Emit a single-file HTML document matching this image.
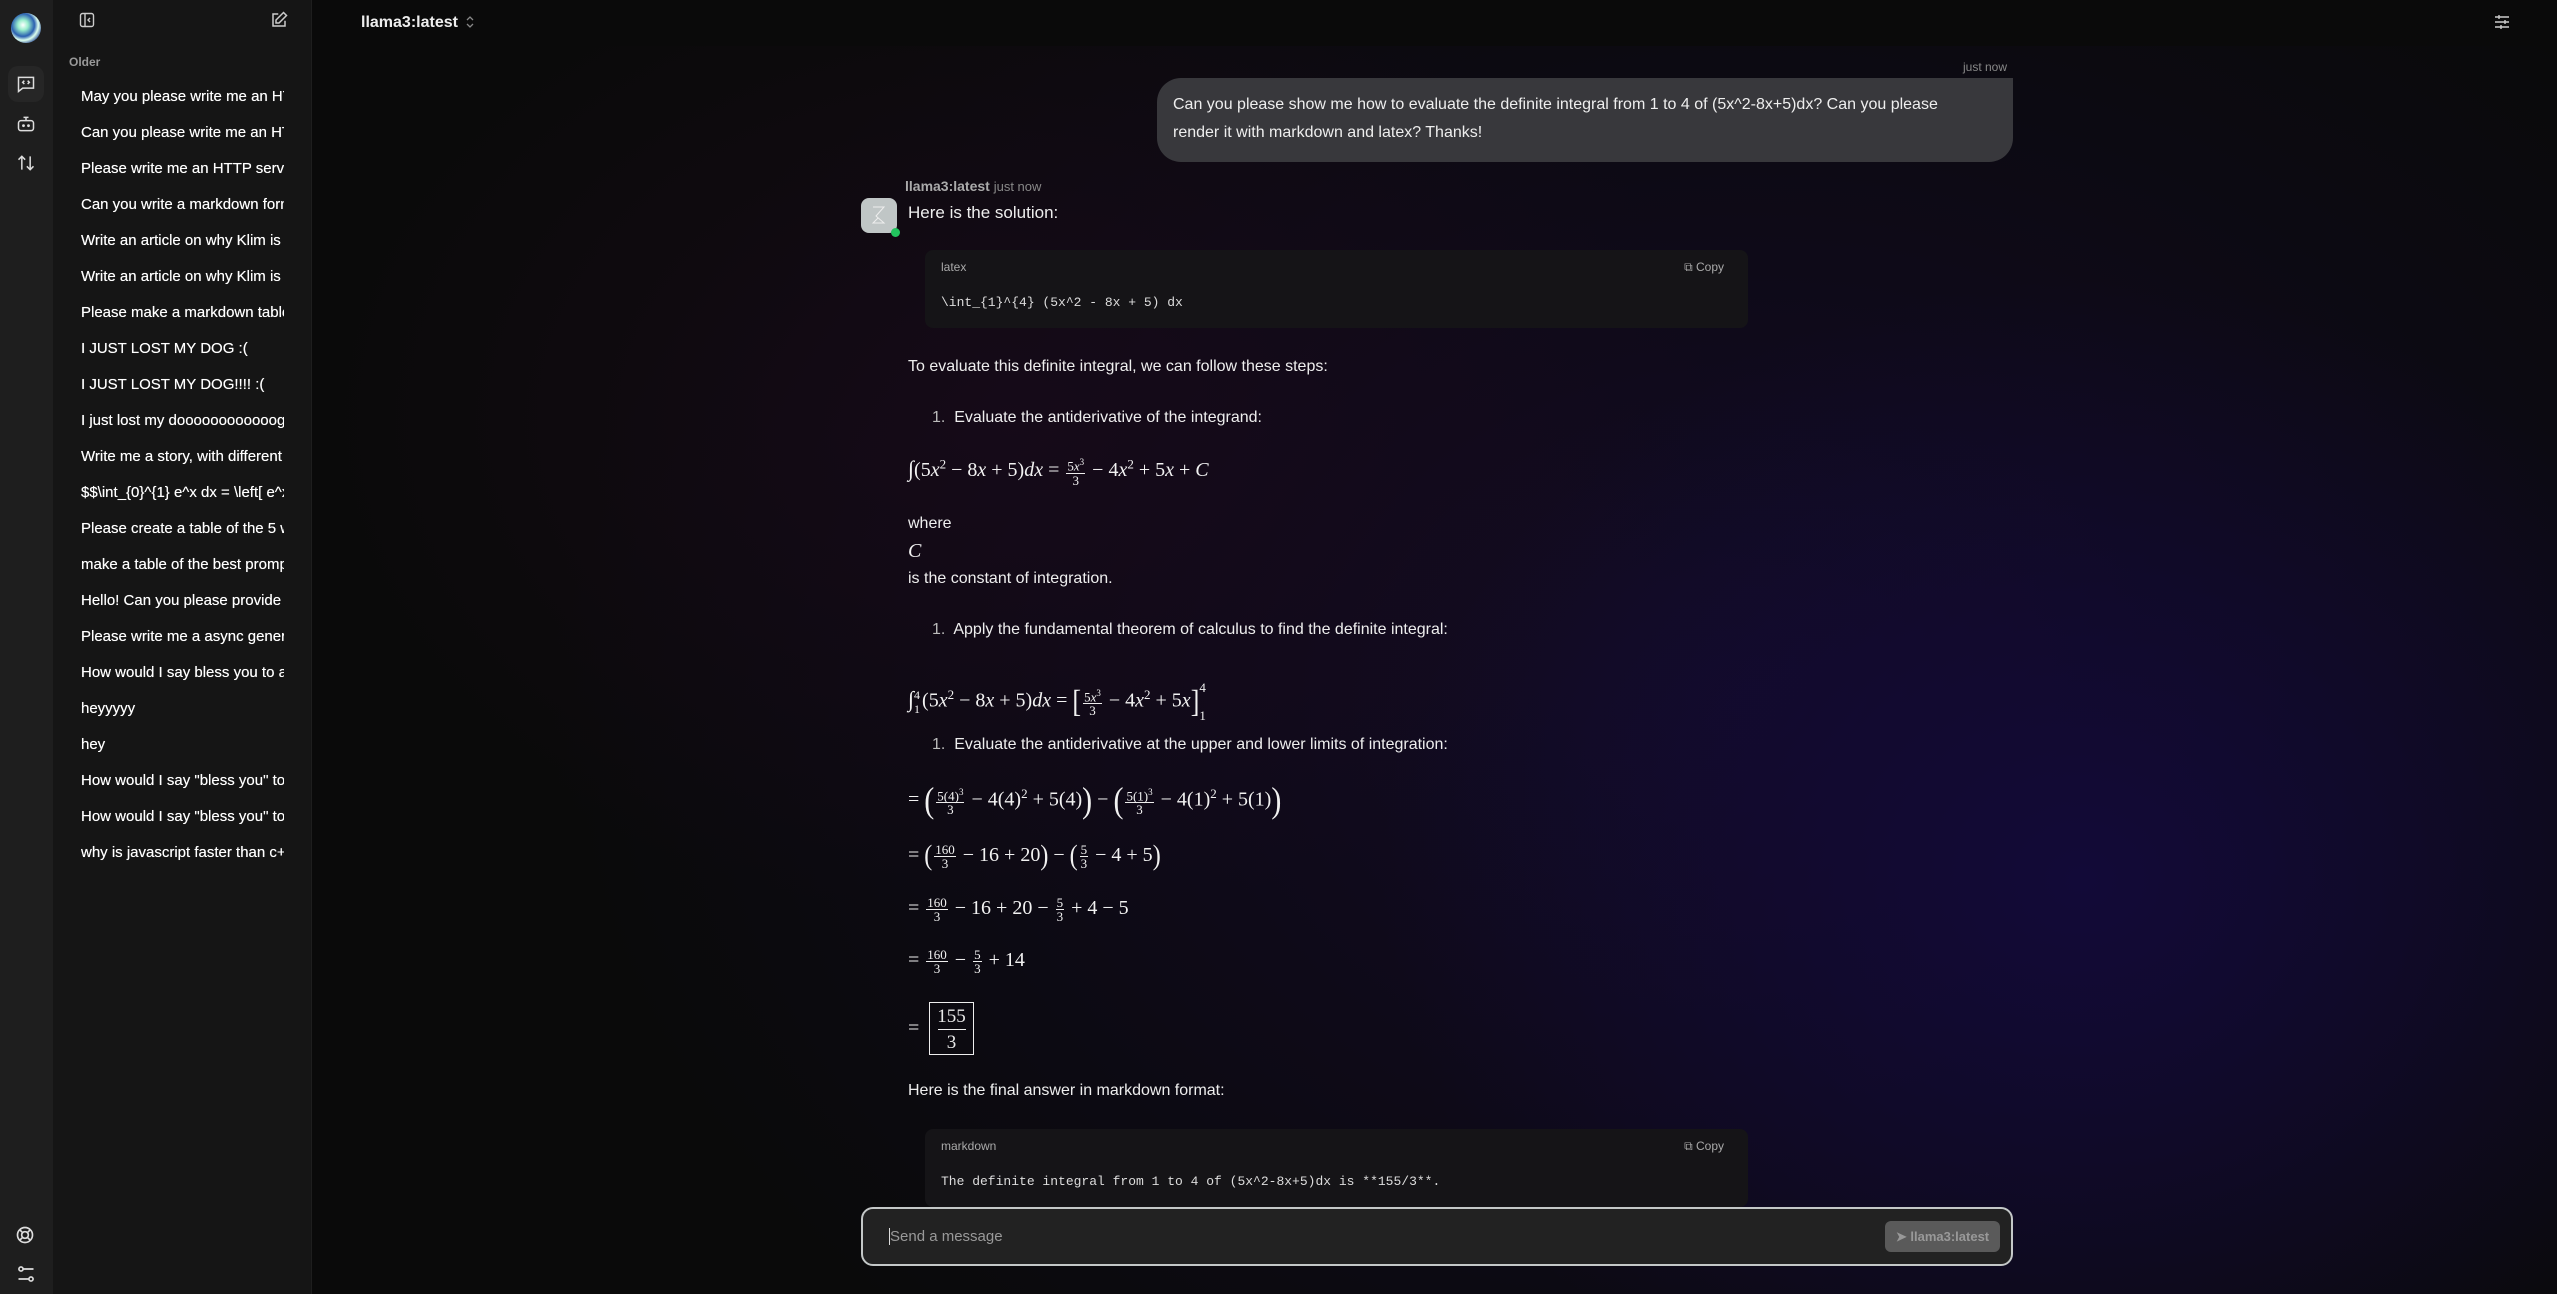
<!DOCTYPE html>
<html><head><meta charset="utf-8"><style>
*{margin:0;padding:0;box-sizing:border-box}
body{width:2557px;height:1294px;overflow:hidden;background:#0a0a0a;font-family:"Liberation Sans",sans-serif;color:#e8e8e8;position:relative}
.rail{position:absolute;left:0;top:0;width:53px;height:1294px;background:#1e1e1e}
.side{position:absolute;left:53px;top:0;width:259px;height:1294px;background:#151515;border-right:1px solid #1e1e1e}
.main{position:absolute;left:312px;top:0;right:0;height:1294px;background:
radial-gradient(ellipse 700px 600px at 1770px 880px,#120a38 0%,rgba(18,10,56,0.6) 40%,rgba(18,10,56,0) 100%),
radial-gradient(ellipse 700px 500px at 700px 420px,rgba(28,10,28,0.6) 0%,rgba(28,10,28,0) 100%),
radial-gradient(ellipse 1200px 900px at 1440px 700px,#130b26 0%,#0c0a12 70%,#0a0a0a 100%)}
.hdr{position:absolute;left:312px;top:0;right:0;height:46px;background:#0a0a0a}
.abs{position:absolute;white-space:nowrap}
.si{position:absolute;left:81px;width:203px;overflow:hidden;white-space:nowrap;font-size:15px;color:#fff;font-weight:400;text-shadow:0 0 0.4px #fff}
.ic{position:absolute}
.t{position:absolute;font-size:16px;color:#eee;white-space:nowrap}
.code{position:absolute;left:925px;width:823px;background:#151417;border-radius:8px}
.code .lab{position:absolute;left:16px;top:10px;font-size:12px;color:#aaa}
.code .cp{position:absolute;right:24px;top:10px;font-size:12px;color:#aaa}
.code .src{position:absolute;left:16px;font-family:"Liberation Mono",monospace;font-size:13px;color:#ddd}
.m{position:absolute;font-family:"Liberation Serif",serif;font-size:20px;color:#f2f2f2;white-space:nowrap}
.m i{font-style:italic}
.fr{display:inline-block;vertical-align:middle;text-align:center;font-size:13px;line-height:13px;margin:0 2px}
.fr span{display:block;padding:0 1px}
.fr span:first-child{border-bottom:1px solid #eee}
sup{font-size:13px}
.big{font-size:30px;vertical-align:middle;display:inline-block;transform:scaleY(1.2)}
</style></head><body>
<div class="rail"></div>
<div class="side"></div>
<div class="main"></div>
<div class="hdr"></div>

<div class="ic" style="left:11px;top:13px;width:30px;height:30px;border-radius:50%;background:radial-gradient(circle at 40% 40%,#fff 0,#9ec 20%,#2a5fb0 45%,#dfe 60%,#1b3d8a 80%)"></div>
<div class="ic" style="left:8px;top:66px;width:36px;height:36px;border-radius:10px;background:#262626"></div>
<svg class="ic" style="left:16px;top:74px" width="20" height="20" viewBox="0 0 24 24" fill="none" stroke="#ddd" stroke-width="1.8"><path d="M3 4h18v13H8l-5 4z"/><path d="M10 8l-2 2 2 2M14 8l2 2-2 2"/></svg>
<svg class="ic" style="left:16px;top:114px" width="20" height="20" viewBox="0 0 24 24" fill="none" stroke="#ddd" stroke-width="1.8"><rect x="3" y="8" width="18" height="12" rx="3"/><path d="M12 8V4M9 4h6"/><circle cx="9" cy="14" r="0.8" fill="#ddd"/><circle cx="15" cy="14" r="0.8" fill="#ddd"/></svg>
<svg class="ic" style="left:16px;top:153px" width="20" height="20" viewBox="0 0 24 24" fill="none" stroke="#ddd" stroke-width="1.8"><path d="M7 20V4M3 8l4-4 4 4M17 4v16M13 16l4 4 4-4"/></svg>
<svg class="ic" style="left:15px;top:1225px" width="20" height="20" viewBox="0 0 24 24" fill="none" stroke="#ddd" stroke-width="2"><circle cx="12" cy="12" r="9"/><circle cx="12" cy="12" r="4"/><path d="M5.6 5.6l3.6 3.6M14.8 14.8l3.6 3.6M18.4 5.6l-3.6 3.6M9.2 14.8l-3.6 3.6"/></svg>
<svg class="ic" style="left:16px;top:1264px" width="20" height="20" viewBox="0 0 24 24" fill="none" stroke="#ddd" stroke-width="2"><circle cx="6" cy="6" r="2.5"/><path d="M9 6h12M3 18h12"/><circle cx="18" cy="18" r="2.5"/></svg>

<svg class="ic" style="left:79px;top:12px" width="16" height="16" viewBox="0 0 16 16" fill="none" stroke="#ccc" stroke-width="1.4"><rect x="1.5" y="1.5" width="13" height="13" rx="2"/><path d="M6 2v12M11 6l-2 2 2 2"/></svg>
<svg class="ic" style="left:270px;top:11px" width="18" height="18" viewBox="0 0 24 24" fill="none" stroke="#ccc" stroke-width="2"><path d="M20 13v7H4V4h7"/><path d="M18 2l4 4-10 10H8v-4z"/></svg>
<div class="abs" style="left:69px;top:55px;font-size:12px;color:#999;font-weight:600">Older</div>
<div class="si" style="top:88px">May you please write me an HTTP server</div>
<div class="si" style="top:124px">Can you please write me an HTTP server</div>
<div class="si" style="top:160px">Please write me an HTTP server</div>
<div class="si" style="top:196px">Can you write a markdown formatted</div>
<div class="si" style="top:232px">Write an article on why Klim is</div>
<div class="si" style="top:268px">Write an article on why Klim is</div>
<div class="si" style="top:304px">Please make a markdown table</div>
<div class="si" style="top:340px">I JUST LOST MY DOG :(</div>
<div class="si" style="top:376px">I JUST LOST MY DOG!!!! :(</div>
<div class="si" style="top:412px">I just lost my doooooooooooog</div>
<div class="si" style="top:448px">Write me a story, with different</div>
<div class="si" style="top:484px">$$\int_{0}^{1} e^x dx = \left[ e^x</div>
<div class="si" style="top:520px">Please create a table of the 5 ways</div>
<div class="si" style="top:556px">make a table of the best prompts</div>
<div class="si" style="top:592px">Hello! Can you please provide me</div>
<div class="si" style="top:628px">Please write me a async generator</div>
<div class="si" style="top:664px">How would I say bless you to a</div>
<div class="si" style="top:700px">heyyyyy</div>
<div class="si" style="top:736px">hey</div>
<div class="si" style="top:772px">How would I say "bless you" to</div>
<div class="si" style="top:808px">How would I say "bless you" to</div>
<div class="si" style="top:844px">why is javascript faster than c++</div>

<div class="abs" style="left:361px;top:14px;font-size:16px;font-weight:700;color:#eee">llama3:latest</div>
<svg class="ic" style="left:465px;top:15px" width="10" height="14" viewBox="0 0 10 14" fill="none" stroke="#888" stroke-width="1.3"><path d="M2 5l3-3 3 3M2 9l3 3 3-3"/></svg>
<svg class="ic" style="left:2493px;top:14px" width="18" height="16" viewBox="0 0 18 16" fill="none" stroke="#ccc" stroke-width="1.4"><path d="M2 3h14M2 8h14M2 13h14M6 1v4M12 6v4M8 11v4"/></svg>

<div class="abs" style="left:1963px;top:60px;font-size:12px;color:#888">just now</div>
<div class="abs" style="left:1157px;top:78px;width:856px;height:84px;background:#38383c;border-radius:24px 0 24px 24px"></div>
<div class="t" style="left:1173px;top:91px;line-height:28px">Can you please show me how to evaluate the definite integral from 1 to 4 of (5x^2-8x+5)dx? Can you please<br>render it with markdown and latex? Thanks!</div>

<div class="abs" style="left:861px;top:198px;width:36px;height:35px;background:#c0c6c6;border-radius:8px"></div>
<svg class="ic" style="left:870px;top:205px" width="18" height="20" viewBox="0 0 18 20" fill="none" stroke="#eee" stroke-width="1"><path d="M3 2h11L6 11l8 7H3l5-5"/></svg>
<div class="abs" style="left:891px;top:228px;width:9px;height:9px;border-radius:50%;background:#22c55e"></div>
<div class="abs" style="left:905px;top:178px;font-size:14px;font-weight:700;color:#aaa">llama3:latest <span style="font-weight:400;font-size:13px;color:#888">just now</span></div>
<div class="t" style="left:908px;top:203px;font-size:17px">Here is the solution:</div>

<div class="code" style="top:250px;height:78px"><div class="lab">latex</div><div class="cp">⧉ Copy</div><div class="src" style="top:45px">\int_{1}^{4} (5x^2 - 8x + 5) dx</div></div>

<div class="t" style="left:908px;top:358px">To evaluate this definite integral, we can follow these steps:</div>
<div class="t" style="left:932px;top:409px"><span style="color:#bbb">1.</span>&nbsp; Evaluate the antiderivative of the integrand:</div>
<div class="m" style="left:908px;top:456px"><span style="font-size:22px">∫</span>(5<i>x</i><sup>2</sup> − 8<i>x</i> + 5)<i>dx</i> = <span class="fr"><span>5<i>x</i><sup style="font-size:9px">3</sup></span><span>3</span></span> − 4<i>x</i><sup>2</sup> + 5<i>x</i> + <i>C</i></div>
<div class="t" style="left:908px;top:515px">where</div>
<div class="m" style="left:908px;top:540px"><i>C</i></div>
<div class="t" style="left:908px;top:570px">is the constant of integration.</div>
<div class="t" style="left:932px;top:621px"><span style="color:#bbb">1.</span>&nbsp; Apply the fundamental theorem of calculus to find the definite integral:</div>
<div class="m" style="left:908px;top:674px"><span style="font-size:22px">∫</span><span style="display:inline-block;vertical-align:middle;font-size:12px;line-height:14px;margin-right:2px">4<br>1</span>(5<i>x</i><sup>2</sup> − 8<i>x</i> + 5)<i>dx</i> = <span class="big" style="font-size:26px">[</span><span class="fr"><span>5<i>x</i><sup style="font-size:9px">3</sup></span><span>3</span></span> − 4<i>x</i><sup>2</sup> + 5<i>x</i><span class="big" style="font-size:26px">]</span><span style="display:inline-block;vertical-align:middle;font-size:13px;line-height:28px">4<br>1</span></div>
<div class="t" style="left:932px;top:736px"><span style="color:#bbb">1.</span>&nbsp; Evaluate the antiderivative at the upper and lower limits of integration:</div>
<div class="m" style="left:908px;top:784px">= <span class="big">(</span><span class="fr"><span>5(4)<sup style="font-size:9px">3</sup></span><span>3</span></span> − 4(4)<sup>2</sup> + 5(4)<span class="big">)</span> − <span class="big">(</span><span class="fr"><span>5(1)<sup style="font-size:9px">3</sup></span><span>3</span></span> − 4(1)<sup>2</sup> + 5(1)<span class="big">)</span></div>
<div class="m" style="left:908px;top:843px">= <span class="big" style="font-size:24px">(</span><span class="fr"><span>160</span><span>3</span></span> − 16 + 20<span class="big" style="font-size:24px">)</span> − <span class="big" style="font-size:24px">(</span><span class="fr"><span>5</span><span>3</span></span> − 4 + 5<span class="big" style="font-size:24px">)</span></div>
<div class="m" style="left:908px;top:896px">= <span class="fr"><span>160</span><span>3</span></span> − 16 + 20 − <span class="fr"><span>5</span><span>3</span></span> + 4 − 5</div>
<div class="m" style="left:908px;top:948px">= <span class="fr"><span>160</span><span>3</span></span> − <span class="fr"><span>5</span><span>3</span></span> + 14</div>
<div class="m" style="left:908px;top:1017px">=</div>
<div class="abs" style="left:929px;top:1002px;width:45px;height:53px;border:1px solid #eee;font-family:'Liberation Serif',serif;font-size:19px;text-align:center;line-height:20px;padding-top:4px">155<div style="width:28px;margin:2px auto 3px;border-top:1px solid #eee"></div>3</div>
<div class="t" style="left:908px;top:1082px">Here is the final answer in markdown format:</div>

<div class="code" style="top:1129px;height:78px"><div class="lab">markdown</div><div class="cp">⧉ Copy</div><div class="src" style="top:45px">The definite integral from 1 to 4 of (5x^2-8x+5)dx is **155/3**.</div></div>

<div class="abs" style="left:861px;top:1207px;width:1152px;height:59px;background:#222;border:2px solid #c4c8c8;border-radius:12px"></div>
<div class="abs" style="left:889px;top:1228px;font-size:15px;color:#999;border-left:1px solid #ddd">Send a message</div>
<div class="abs" style="left:1885px;top:1221px;width:115px;height:31px;background:#5a5a5a;border-radius:6px;font-size:13px;color:#999;font-weight:600;line-height:31px;text-align:center">➤ llama3:latest</div>
</body></html>
